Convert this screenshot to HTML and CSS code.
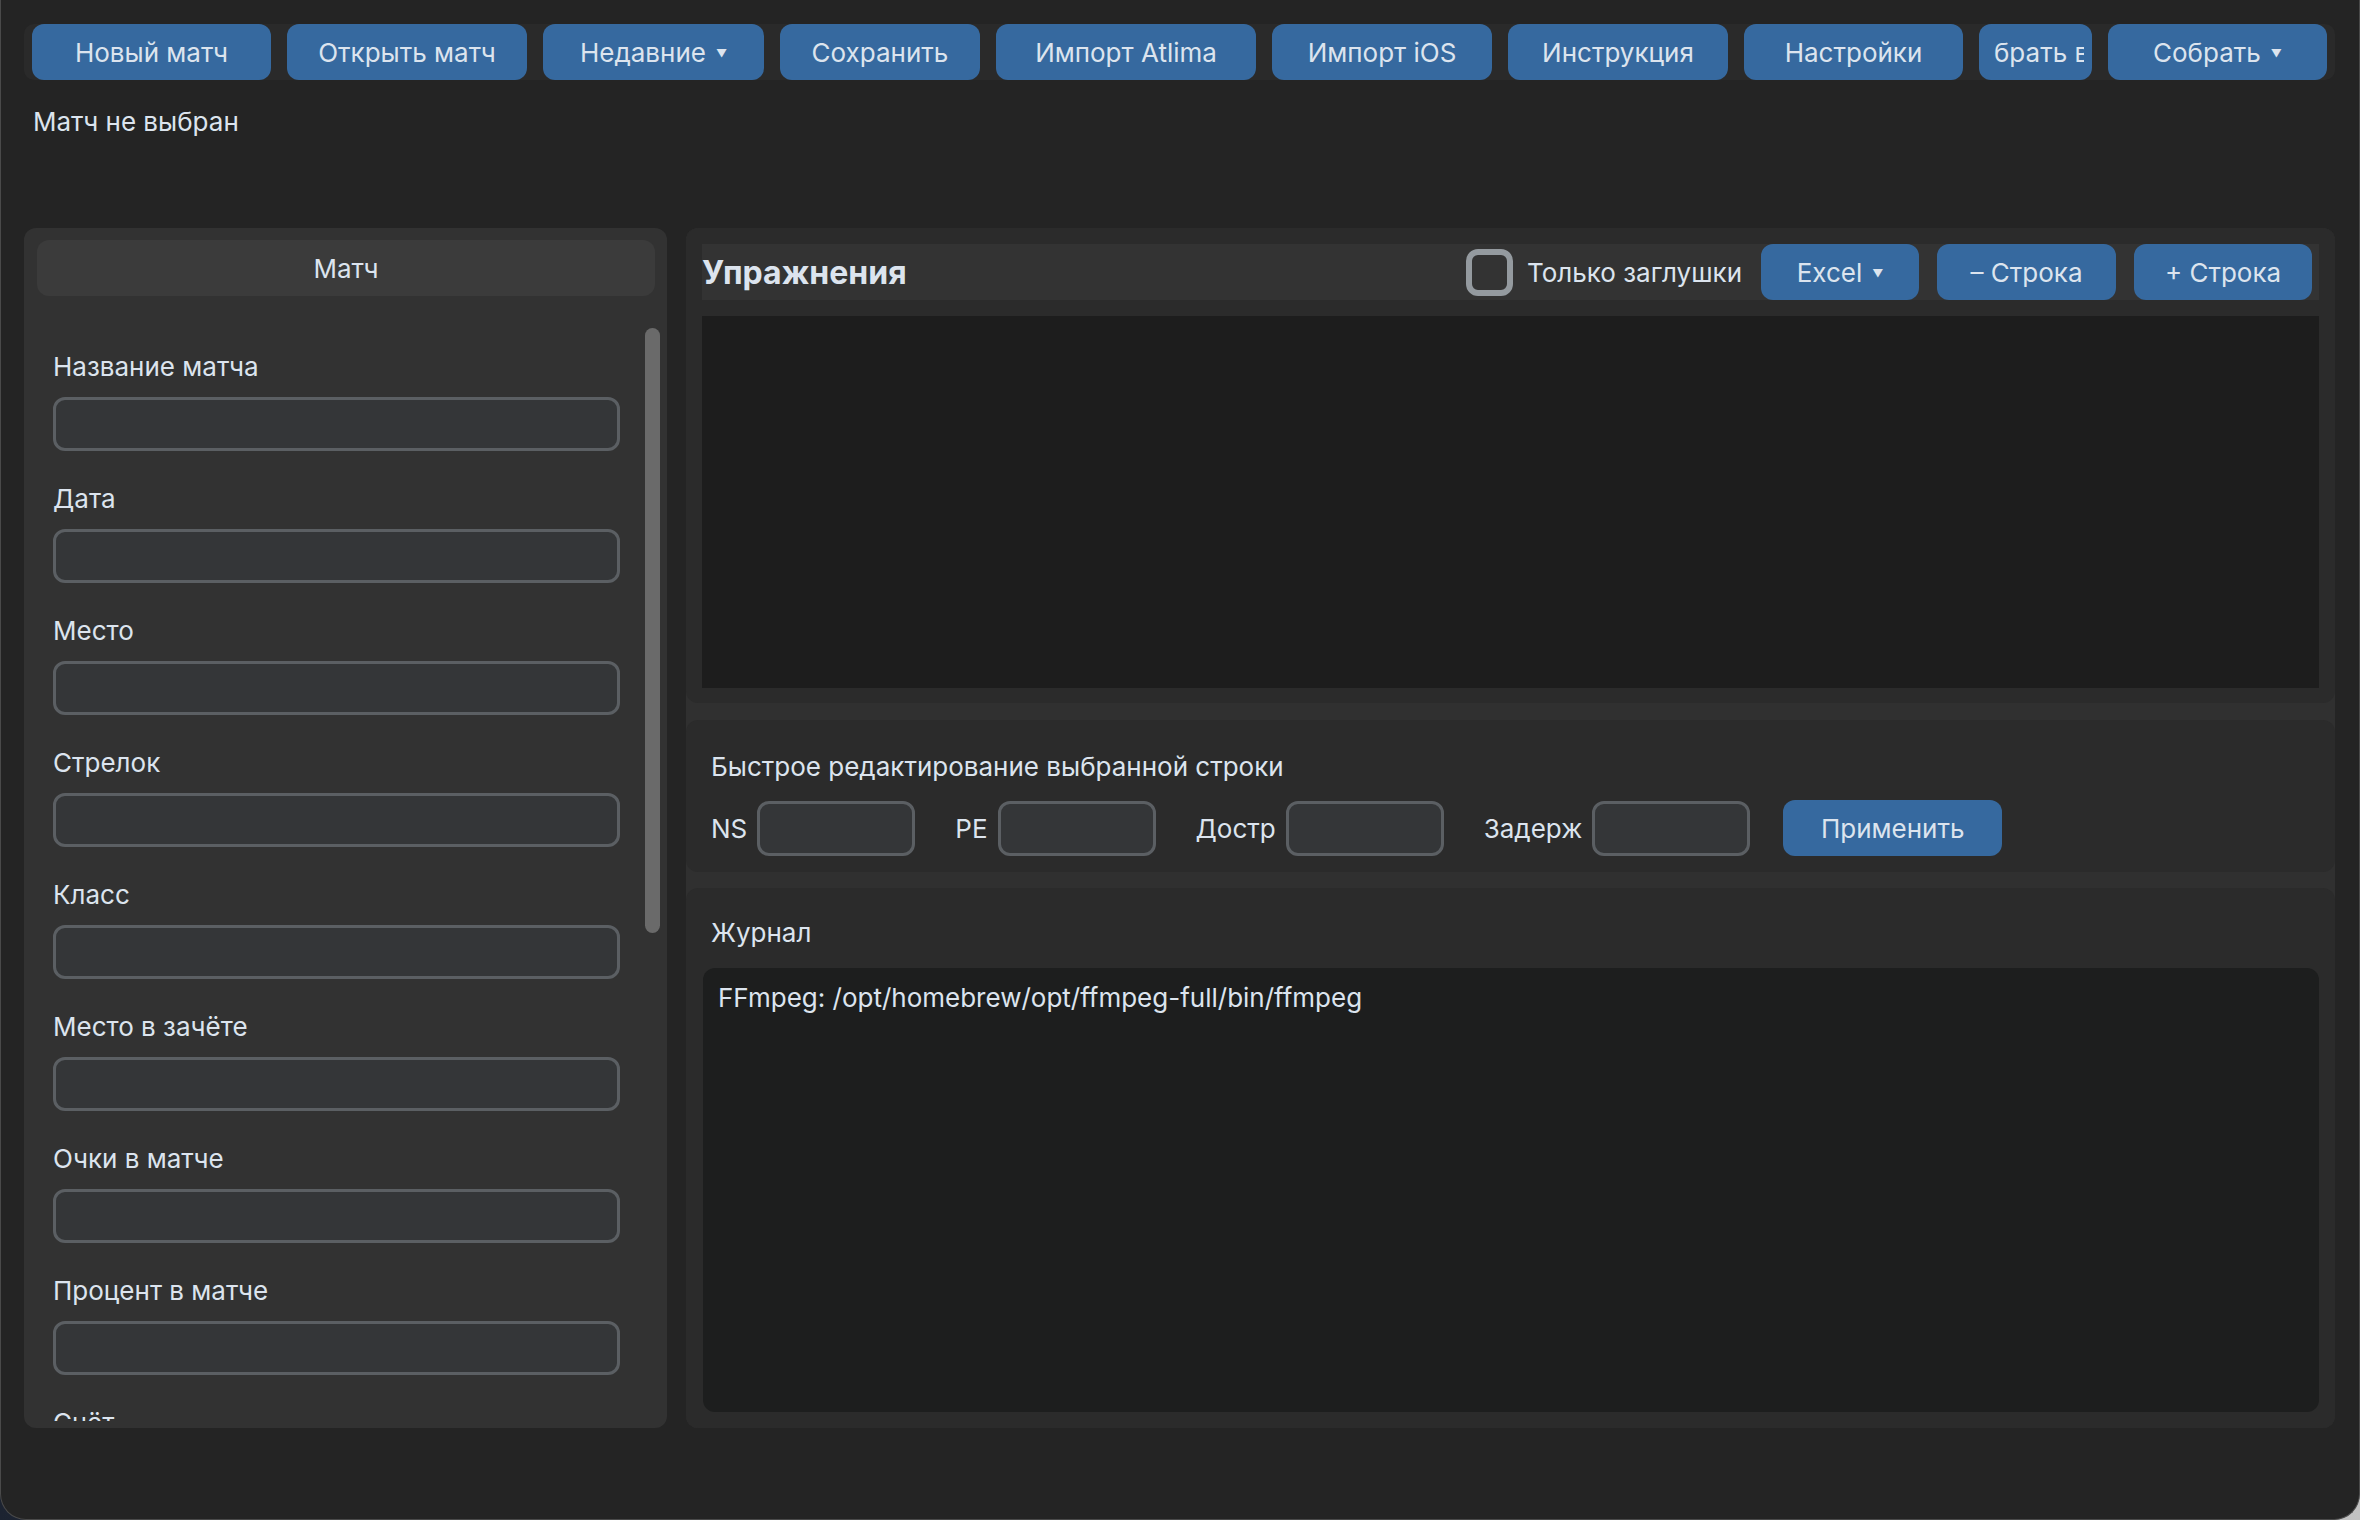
FILE: index.html
```html
<!DOCTYPE html>
<html lang="ru">
<head>
    <meta charset="UTF-8">
    <meta name="viewport" content="width=device-width, initial-scale=1.0">
    <title>Матч</title>
    <link rel="stylesheet" href="styles.css">
</head>
<body>
    <div class="window">
        <!-- верхняя панель кнопок -->
        <div class="toolbar">
            <button class="btn w-239">Новый матч</button>
            <button class="btn w-240">Открыть матч</button>
            <button class="btn w-221">Недавние <span class="arrow">▼</span></button>
            <button class="btn w-200">Сохранить</button>
            <button class="btn w-260">Импорт Atlima</button>
            <button class="btn w-220">Импорт iOS</button>
            <button class="btn w-220">Инструкция</button>
            <button class="btn w-219">Настройки</button>
            <button class="btn w-113 narrow"><span class="clip">Выбрать всё</span></button>
            <button class="btn w-219">Собрать <span class="arrow">▼</span></button>
        </div>

        <div class="status">Матч не выбран</div>

        <div class="main">
            <!-- левая колонка: поля матча -->
            <div class="left-panel">
                <div class="panel-title">Матч</div>
                <div class="scroll-area">
                    <div class="fields">
                        <div class="field"><label>Название матча</label><input class="entry" type="text"></div>
                        <div class="field"><label>Дата</label><input class="entry" type="text"></div>
                        <div class="field"><label>Место</label><input class="entry" type="text"></div>
                        <div class="field"><label>Стрелок</label><input class="entry" type="text"></div>
                        <div class="field"><label>Класс</label><input class="entry" type="text"></div>
                        <div class="field"><label>Место в зачёте</label><input class="entry" type="text"></div>
                        <div class="field"><label>Очки в матче</label><input class="entry" type="text"></div>
                        <div class="field"><label>Процент в матче</label><input class="entry" type="text"></div>
                        <div class="field"><label>Счёт</label><input class="entry" type="text"></div>
                    </div>
                    <div class="scroll-track"><div class="scroll-thumb"></div></div>
                </div>
            </div>

            <!-- правая колонка -->
            <div class="right-panel">
                <div class="section exercises">
                    <div class="ex-header">
                        <div class="ex-title">Упражнения</div>
                        <label class="check"><span class="check-box"></span>Только заглушки</label>
                        <button class="btn w-158 ml">Excel <span class="arrow">▼</span></button>
                        <button class="btn w-179 ml">– Строка</button>
                        <button class="btn w-178 ml">+ Строка</button>
                    </div>
                    <div class="table"></div>
                </div>

                <div class="section quick">
                    <div class="section-title">Быстрое редактирование выбранной строки</div>
                    <div class="quick-row">
                        <span class="q-label">NS</span><input class="entry q-entry" type="text">
                        <span class="q-label">PE</span><input class="entry q-entry" type="text">
                        <span class="q-label">Достр</span><input class="entry q-entry" type="text">
                        <span class="q-label">Задерж</span><input class="entry q-entry last" type="text">
                        <button class="btn w-219">Применить</button>
                    </div>
                </div>

                <div class="section log">
                    <div class="section-title">Журнал</div>
                    <div class="log-box">FFmpeg: /opt/homebrew/opt/ffmpeg-full/bin/ffmpeg</div>
                </div>
            </div>
        </div>
    </div>
</body>
</html>
```

FILE: styles.css
```css
html {
    background: linear-gradient(90deg, #1c2331 0%, #5a5f68 50%, #c2c2c2 100%);
}

body {
    margin: 0;
    height: 1520px;
    box-sizing: border-box;
    background-color: #242424;
    border: 1px solid #4a4a4a;
    border-top: none;
    border-radius: 0 0 26px 26px;
    overflow: hidden;
    font-family: Inter, "Noto Sans", sans-serif;
    font-size: 26px;
    color: #dce4ee;
}

.window {
    padding: 24px 24px 0 23px;
}

.toolbar {
    display: flex;
    gap: 16px;
    height: 56px;
    padding: 0 8px;
    background-color: #2a2a2a;
    border-radius: 10px;
}

.btn {
    flex: none;
    display: inline-flex;
    justify-content: center;
    align-items: center;
    height: 56px;
    padding: 0;
    border: none;
    border-radius: 12px;
    background-color: #36699f;
    color: #dce4ee;
    font-family: inherit;
    font-size: 26px;
    white-space: nowrap;
    overflow: hidden;
}

/* текст не влезает в кнопку и обрезается с обеих сторон */
.btn.narrow {
    padding: 0 8px 0 14px;
    box-sizing: border-box;
}

.clip {
    display: flex;
    justify-content: center;
    width: 100%;
    overflow: hidden;
}

.arrow {
    font-size: 11px;
    margin-left: 10px;
    margin-top: 2px;
}

.w-113 { width: 113px; }
.w-158 { width: 158px; }
.w-178 { width: 178px; }
.w-179 { width: 179px; }
.w-200 { width: 200px; }
.w-219 { width: 219px; }
.w-220 { width: 220px; }
.w-221 { width: 221px; }
.w-239 { width: 239px; }
.w-240 { width: 240px; }
.w-260 { width: 260px; }

.status {
    margin-top: 26px;
    padding-left: 9px;
    line-height: 32px;
}

.main {
    display: flex;
    gap: 19px;
    height: 1200px;
    margin-top: 90px;
}

/* левая колонка */
.left-panel {
    width: 643px;
    flex: none;
    box-sizing: border-box;
    padding: 12px 7px 7px 13px;
    display: flex;
    flex-direction: column;
    background-color: #323232;
    border-radius: 12px;
}

.panel-title {
    height: 56px;
    margin-right: 5px;
    display: flex;
    justify-content: center;
    align-items: center;
    background-color: #3b3b3b;
    border-radius: 12px;
}

.scroll-area {
    flex: 1;
    min-height: 0;
    display: flex;
    margin-top: 20px;
    overflow: hidden;
}

.fields {
    flex: 1;
    padding: 35px 25px 0 16px;
}

.field label {
    display: block;
    line-height: 32px;
    margin-bottom: 14px;
}

.entry {
    display: block;
    width: 100%;
    height: 54px;
    box-sizing: border-box;
    margin: 0 0 32px 0;
    border: 3px solid #5b5f63;
    border-radius: 12px;
    background-color: #343638;
    outline: none;
}

.scroll-track {
    width: 15px;
    flex: none;
    padding-top: 12px;
}

.scroll-thumb {
    height: 605px;
    background-color: #6a6a6a;
    border-radius: 8px;
}

/* правая колонка */
.right-panel {
    flex: 1;
    display: flex;
    flex-direction: column;
    background-color: #303030;
    border-radius: 12px;
}

.section {
    background-color: #2b2b2b;
    border-radius: 12px;
    box-sizing: border-box;
}

.exercises {
    height: 475px;
    padding: 16px 16px 0 16px;
}

.ex-header {
    display: flex;
    align-items: center;
    height: 56px;
    padding-right: 7px;
    background-color: #333333;
}

.ex-title {
    flex: 1;
    font-size: 32px;
    font-weight: 700;
}

.check {
    display: flex;
    align-items: center;
    gap: 14px;
    margin-right: 1px;
}

.check-box {
    width: 47px;
    height: 47px;
    box-sizing: border-box;
    border: 6px solid #949a9f;
    border-radius: 12px;
}

.ml {
    margin-left: 18px;
}

.table {
    height: 372px;
    margin-top: 16px;
    background-color: #1d1d1d;
}

.quick {
    height: 152px;
    margin-top: 17px;
    padding: 31px 24px 0 25px;
}

.section-title {
    line-height: 32px;
}

.quick-row {
    display: flex;
    align-items: center;
    height: 56px;
    margin-top: 17px;
}

.q-label {
    margin-right: 10px;
}

.q-entry {
    width: 158px;
    height: 55px;
    margin: 0 40px 0 0;
}

.q-entry.last {
    margin-right: 33px;
}

.log {
    flex: 1;
    margin-top: 16px;
    display: flex;
    flex-direction: column;
    padding: 29px 16px 16px 17px;
}

.log .section-title {
    margin-left: 8px;
}

.log-box {
    flex: 1;
    margin-top: 19px;
    padding: 14px 15px;
    line-height: 32px;
    background-color: #1d1e1e;
    border-radius: 12px;
}
```
